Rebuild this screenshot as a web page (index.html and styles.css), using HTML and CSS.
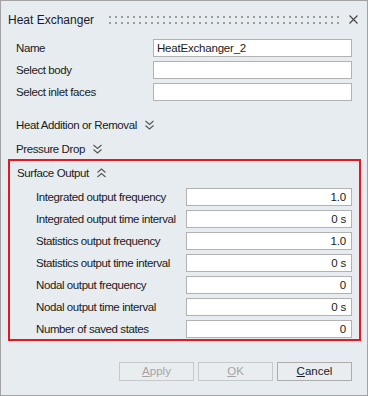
FILE: index.html
```html
<!DOCTYPE html>
<html>
<head lang="en">
    <meta charset="UTF-8">
    <title>Heat Exchanger</title>
    <link rel="stylesheet" href="styles.css">
</head>
<body>

<div class="dialog">
    <div class="titlebar">
        <span class="title">Heat Exchanger</span>
        <div class="grip"></div>
        <svg class="close" width="9" height="9" viewBox="0 0 9 9">
            <path d="M0.5 0.5 L8.5 8.5 M8.5 0.5 L0.5 8.5" stroke="#444" stroke-width="1.1" fill="none"/>
        </svg>
    </div>

    <div class="content">
        <div class="field">
            <label>Name</label>
            <div class="input wide">HeatExchanger_2</div>
        </div>
        <div class="field">
            <label>Select body</label>
            <div class="input wide"></div>
        </div>
        <div class="field">
            <label>Select inlet faces</label>
            <div class="input wide"></div>
        </div>

        <div class="header first">
            <span>Heat Addition or Removal</span>
            <svg class="chev" width="9" height="10" viewBox="0 0 9 10">
                <path d="M0.5 1 L4.5 4.5 L8.5 1 M0.5 5.5 L4.5 9 L8.5 5.5" stroke="#555" stroke-width="1.1" fill="none"/>
            </svg>
        </div>
        <div class="header last">
            <span>Pressure Drop</span>
            <svg class="chev" width="9" height="10" viewBox="0 0 9 10">
                <path d="M0.5 1 L4.5 4.5 L8.5 1 M0.5 5.5 L4.5 9 L8.5 5.5" stroke="#555" stroke-width="1.1" fill="none"/>
            </svg>
        </div>

        <div class="surface">
            <div class="header">
                <span>Surface Output</span>
                <svg class="chev" width="9" height="10" viewBox="0 0 9 10">
                    <path d="M0.5 4.5 L4.5 1 L8.5 4.5 M0.5 9 L4.5 5.5 L8.5 9" stroke="#555" stroke-width="1.1" fill="none"/>
                </svg>
            </div>
            <div class="rows">
                <div class="field sub">
                    <label>Integrated output frequency</label>
                    <div class="input num">1.0</div>
                </div>
                <div class="field sub">
                    <label>Integrated output time interval</label>
                    <div class="input num">0 s</div>
                </div>
                <div class="field sub">
                    <label>Statistics output frequency</label>
                    <div class="input num">1.0</div>
                </div>
                <div class="field sub">
                    <label>Statistics output time interval</label>
                    <div class="input num">0 s</div>
                </div>
                <div class="field sub">
                    <label>Nodal output frequency</label>
                    <div class="input num">0</div>
                </div>
                <div class="field sub">
                    <label>Nodal output time interval</label>
                    <div class="input num">0 s</div>
                </div>
                <div class="field sub">
                    <label>Number of saved states</label>
                    <div class="input num">0</div>
                </div>
            </div>
        </div>

        <div class="buttons">
            <div class="btn disabled"><u>A</u>pply</div>
            <div class="btn disabled"><u>O</u>K</div>
            <div class="btn"><u>C</u>ancel</div>
        </div>
    </div>
</div>

</body>
</html>
```

FILE: styles.css
```css
* {
    padding: 0;
    margin: 0;
    box-sizing: border-box;
}
body {
    font-family: "Liberation Sans", Arial, sans-serif;
    font-size: 11.5px;
    color: #1a1a22;
    background: #e6ecf0;
}
.dialog {
    width: 368px;
    height: 396px;
    border: 1px solid #a3a3a3;
    background: #e6ecf0;
}
.titlebar {
    height: 37px;
    display: flex;
    align-items: center;
    padding: 0 9px 0 7px;
}
.title {
    font-size: 12px;
    color: #1a1a2a;
}
.grip {
    flex: 1;
    height: 8px;
    margin: 0 8px 0 15px;
    background:
        linear-gradient(90deg, #9c9c9c 2px, transparent 2px) 0 0 / 6px 2px repeat-x,
        linear-gradient(90deg, #9c9c9c 2px, transparent 2px) 0 6px / 6px 2px repeat-x;
}
.close {
    display: block;
}
.content {
    padding: 1px 15px 0 15px;
}
.field {
    display: flex;
    align-items: center;
    height: 18px;
    margin-bottom: 4px;
}
.field label {
    flex: 1;
    letter-spacing: -0.4px;
}
.input {
    height: 18px;
    background: #fff;
    border: 1px solid #b2b2b2;
    line-height: 16px;
    padding: 0 3px;
    font-size: 11.5px;
    letter-spacing: -0.2px;
    white-space: nowrap;
}
.wide {
    width: 199px;
}
.num {
    width: 166px;
    text-align: right;
    padding-right: 5px;
}
.header {
    display: flex;
    align-items: center;
    height: 20px;
    margin-bottom: 4px;
    letter-spacing: -0.4px;
}
.header.first {
    margin-top: 14px;
}
.header.last {
    margin-bottom: 0;
}
.chev {
    display: block;
    margin-left: 8px;
}
.surface {
    border: 2px solid #e8161f;
    margin: 0 -9px 0 -8px;
    padding: 2px 7px 1px 7px;
}
.surface .header {
    margin-bottom: 5px;
}
.rows {
    padding-left: 19px;
}
.sub:last-child {
    margin-bottom: 0;
}
.buttons {
    display: flex;
    justify-content: flex-end;
    gap: 4px;
    margin-top: 21px;
}
.btn {
    width: 75px;
    height: 19px;
    border: 1px solid #acacac;
    background: #e9edf0;
    text-align: center;
    line-height: 17px;
    font-size: 11.5px;
}
.btn u {
    text-underline-offset: 1px;
}
.disabled {
    color: #a4a4a4;
    border-color: #c6c9cc;
}
```
